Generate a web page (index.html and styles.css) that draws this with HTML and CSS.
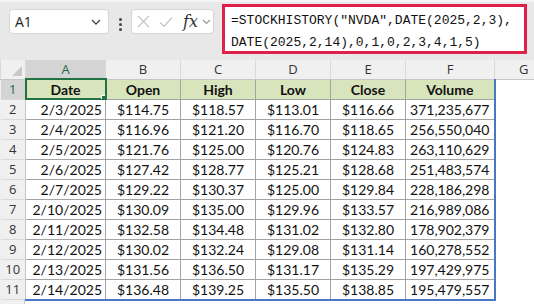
FILE: index.html
```html
<!DOCTYPE html>
<html lang="en">
<head>
  <meta charset="UTF-8">
  <title>STOCKHISTORY - NVDA</title>
  <link rel="stylesheet" href="styles.css">
</head>
<body>

<div class="toolbar">
  <div class="namebox">
    <span>A1</span>
    <svg width="10" height="6" viewBox="0 0 10 6"><path d="M1 1 L5 5 L9 1" fill="none" stroke="#444" stroke-width="1.3"/></svg>
  </div>
  <div class="dots"><i></i><i></i><i></i></div>
  <div class="fxbox">
    <svg width="13" height="13" viewBox="0 0 13 13"><path d="M1 1 L12 12 M12 1 L1 12" stroke="#c4c4c4" stroke-width="1.2"/></svg>
    <svg width="14" height="12" viewBox="0 0 14 12"><path d="M1 6.5 L5 10.5 L13 1.5" fill="none" stroke="#c4c4c4" stroke-width="1.2"/></svg>
    <span class="fx">fx</span>
    <svg width="9" height="6" viewBox="0 0 9 6"><path d="M1 1 L4.5 4.5 L8 1" fill="none" stroke="#999" stroke-width="1.2"/></svg>
  </div>
  <div class="formula">=STOCKHISTORY("NVDA",DATE(2025,2,3),<br>DATE(2025,2,14),0,1,0,2,3,4,1,5)</div>
</div>

<table class="sheet">
  <colgroup>
    <col class="c-rh"><col class="c-a"><col class="c-n"><col class="c-n"><col class="c-n"><col class="c-n"><col class="c-f"><col class="c-g">
  </colgroup>
  <tr class="colheads">
    <th class="corner"></th><th class="cur">A</th><th>B</th><th>C</th><th>D</th><th>E</th><th>F</th><th class="gh">G</th>
  </tr>
  <tr class="head">
    <th class="rh cur">1</th>
    <td class="sel">Date</td><td>Open</td><td>High</td><td>Low</td><td>Close</td><td class="last">Volume</td><td class="g"></td>
  </tr>
  <tr><th class="rh">2</th><td class="date">2/3/2025</td><td>$114.75</td><td>$118.57</td><td>$113.01</td><td>$116.66</td><td class="last">371,235,677</td><td class="g"></td></tr>
  <tr><th class="rh">3</th><td class="date">2/4/2025</td><td>$116.96</td><td>$121.20</td><td>$116.70</td><td>$118.65</td><td class="last">256,550,040</td><td class="g"></td></tr>
  <tr><th class="rh">4</th><td class="date">2/5/2025</td><td>$121.76</td><td>$125.00</td><td>$120.76</td><td>$124.83</td><td class="last">263,110,629</td><td class="g"></td></tr>
  <tr><th class="rh">5</th><td class="date">2/6/2025</td><td>$127.42</td><td>$128.77</td><td>$125.21</td><td>$128.68</td><td class="last">251,483,574</td><td class="g"></td></tr>
  <tr><th class="rh">6</th><td class="date">2/7/2025</td><td>$129.22</td><td>$130.37</td><td>$125.00</td><td>$129.84</td><td class="last">228,186,298</td><td class="g"></td></tr>
  <tr><th class="rh">7</th><td class="date">2/10/2025</td><td>$130.09</td><td>$135.00</td><td>$129.96</td><td>$133.57</td><td class="last">216,989,086</td><td class="g"></td></tr>
  <tr><th class="rh">8</th><td class="date">2/11/2025</td><td>$132.58</td><td>$134.48</td><td>$131.02</td><td>$132.80</td><td class="last">178,902,379</td><td class="g"></td></tr>
  <tr><th class="rh">9</th><td class="date">2/12/2025</td><td>$130.02</td><td>$132.24</td><td>$129.08</td><td>$131.14</td><td class="last">160,278,552</td><td class="g"></td></tr>
  <tr><th class="rh">10</th><td class="date">2/13/2025</td><td>$131.56</td><td>$136.50</td><td>$131.17</td><td>$135.29</td><td class="last">197,429,975</td><td class="g"></td></tr>
  <tr class="end"><th class="rh">11</th><td class="date">2/14/2025</td><td>$136.48</td><td>$139.25</td><td>$135.50</td><td>$138.85</td><td class="last">195,479,557</td><td class="g"></td></tr>
</table>

</body>
</html>
```

FILE: styles.css
```css
* { box-sizing: border-box; margin: 0; padding: 0; }
html, body {
  height: 304px;
  overflow: hidden;
}
body {
  width: 534px;
  /* row header strip continues below the last row */
  background: linear-gradient(90deg, #f0f0f0 24px, #c6c6c6 24px 25px, #fff 25px);
  font-family: 'Open Sans', sans-serif;
}

/* formula bar strip */
.toolbar {
  height: 60px;
  background: #e8e8e8;
  border-top: 2px solid #f4f4f4;
  padding: 2px 0 0 9px;
  display: flex;
  align-items: flex-start;
}
.namebox {
  width: 100px;
  height: 25px;
  margin-top: 5px;
  background: #fff;
  border: 1px solid #d6d6d6;
  border-radius: 4px;
  display: flex;
  align-items: center;
  justify-content: space-between;
  padding: 0 7px 0 5px;
  font-size: 14px;
  color: #222;
}
.dots {
  width: 22px;
  margin-top: 14px;
  display: flex;
  flex-direction: column;
  align-items: center;
  gap: 2px;
}
.dots i {
  width: 3px;
  height: 3px;
  background: #444;
  border-radius: 50%;
}
.fxbox {
  width: 83px;
  height: 25px;
  margin-top: 5px;
  background: #fff;
  border: 1px solid #d6d6d6;
  border-radius: 4px;
  display: flex;
  align-items: center;
  gap: 9px;
  padding-left: 5px;
}
.fxbox .fx {
  font-family: 'DejaVu Serif', serif;
  font-style: italic;
  font-size: 16px;
  color: #333;
  margin-left: 1px;
  margin-right: -5px;
  line-height: 1;
}
.formula {
  width: 305px;
  height: 50px;
  margin-left: 8px;
  background: #fff;
  border: 3px solid #e0204b;
  padding: 3px 0 0 6px;
  font-family: 'Liberation Mono', monospace;
  font-size: 13px;
  line-height: 22px;
  color: #111;
  white-space: nowrap;
}

/* grid */
.sheet {
  border-collapse: collapse;
  table-layout: fixed;
  width: 534px;
  font-family: 'Lato', sans-serif;
  font-size: 14px;
  color: #111;
}
.c-rh { width: 25px; }
.c-a { width: 80px; }
.c-n { width: 75px; }
.c-f { width: 89px; }
.c-g { width: 40px; }

.sheet tr { height: 20px; }
.sheet tr.colheads { height: 19px; }
.colheads th {
  background: #f0f0f0;
  border-left: 1px solid #d9d9d9;
  border-bottom: 1px solid #c6c6c6;
  font-family: 'Open Sans', sans-serif;
  font-weight: normal;
  font-size: 13px;
  color: #333;
  line-height: 18px;
}
.colheads th.cur {
  background: #d4d4d4;
  color: #1e6b40;
}
.colheads th.gh {
  text-align: left;
  padding-left: 24px;
}
.corner { position: relative; }
.corner::after {
  content: "";
  position: absolute;
  right: 3px;
  bottom: 3px;
  border-style: solid;
  border-width: 0 0 10px 10px;
  border-color: transparent transparent #c9c9c9 transparent;
}
.rh {
  background: #f0f0f0;
  border-bottom: 1px solid #d9d9d9;
  border-right: 1px solid #c6c6c6;
  font-family: 'Open Sans', sans-serif;
  font-weight: normal;
  font-size: 13px;
  color: #333;
  text-align: center;
}
.rh.cur { background: #d4d4d4; color: #1e6b40; }

.sheet td {
  border: 1px solid #a3a3a3;
  text-align: center;
  white-space: nowrap;
  overflow: hidden;
  padding: 0 3px;
  line-height: 19px;
}
.sheet td.date { text-align: right; }
.head td {
  background: #d8e4bc;
  font-weight: bold;
}
.sheet td.last { border-right: 2px solid #4a76c6; }
.end td { border-bottom: 2px solid #4a76c6; }
.sheet td.g { border: none; background: #fff; }

.sel {
  position: relative;
  outline: 2px solid #217346;
  outline-offset: -1px;
}
.sel::after {
  content: "";
  position: absolute;
  right: -4px;
  bottom: -4px;
  width: 6px;
  height: 6px;
  background: #217346;
  border: 1px solid #fff;
  z-index: 2;
}
```
